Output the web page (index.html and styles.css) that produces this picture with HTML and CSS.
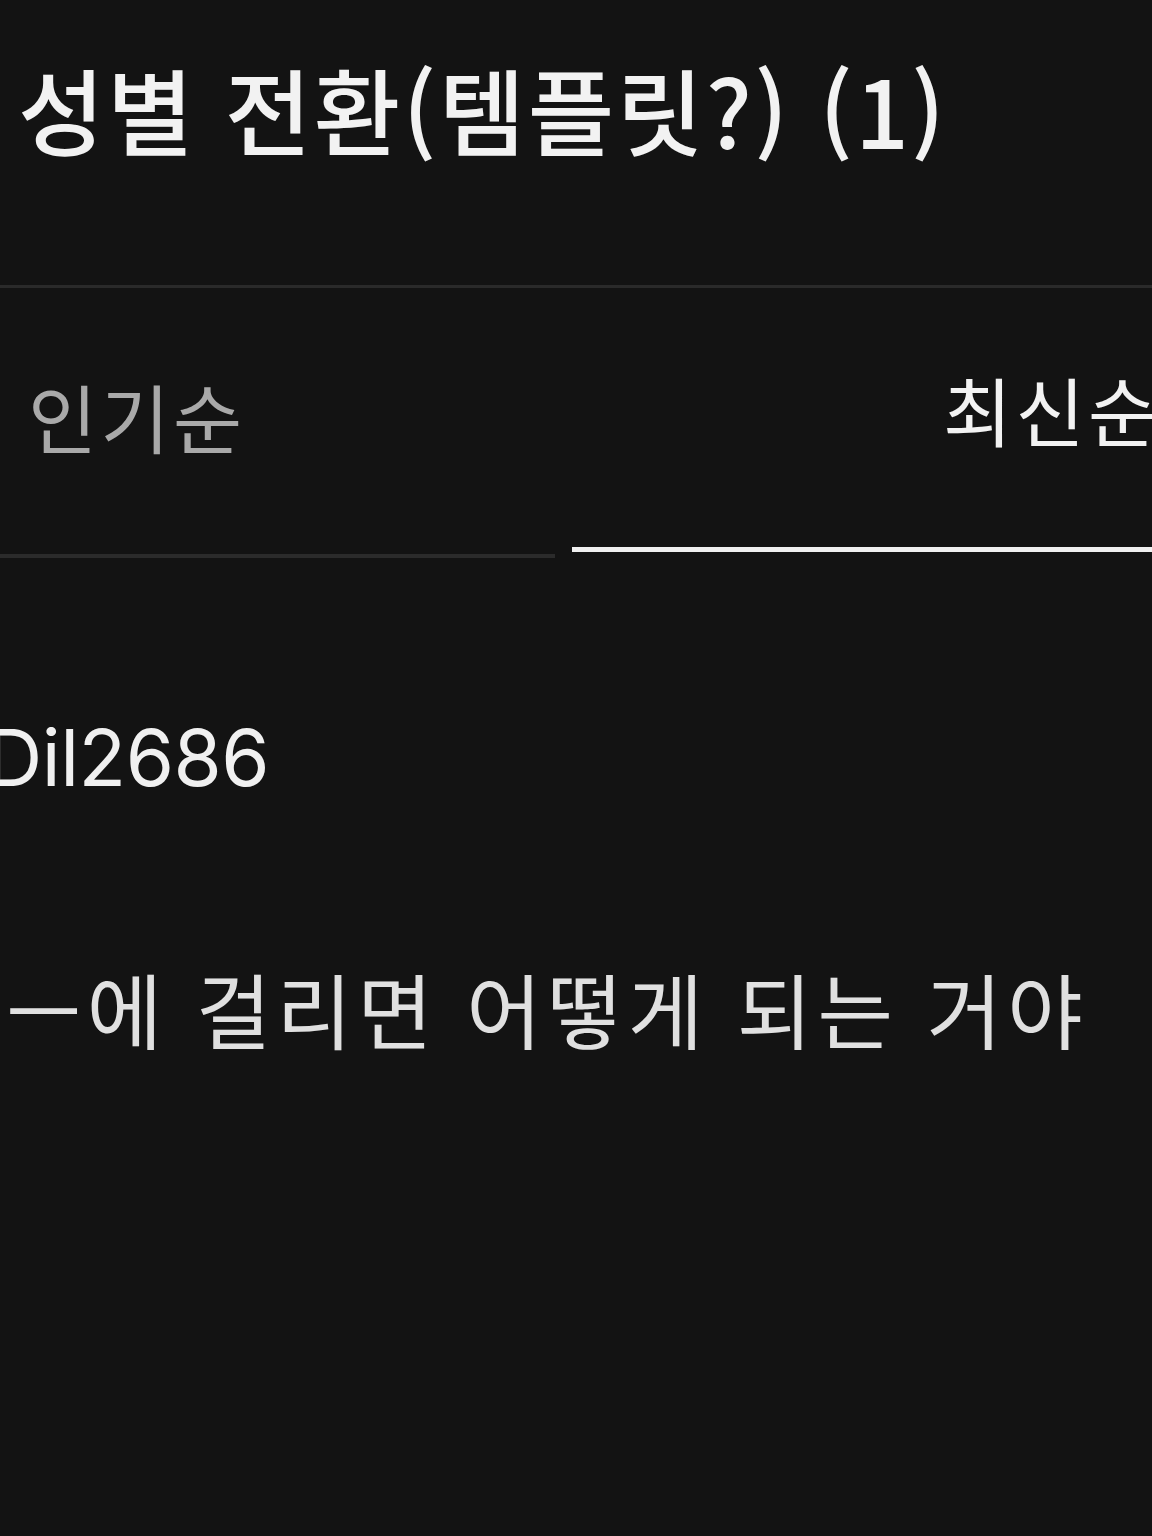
FILE: index.html
```html
<!DOCTYPE html>
<html lang="ko">
<head>
<meta charset="utf-8">
<title>성별 전환(템플릿?) (1)</title>
<link rel="stylesheet" href="styles.css">
</head>
<body>
<div class="page">
  <header class="header">
    <h1 class="title">성별 전환(템플릿?) (1)</h1>
  </header>
  <div class="divider"></div>
  <nav class="tabs">
    <div class="tab">
      <span class="tab-label">인기순</span>
      <div class="tab-line"></div>
    </div>
    <div class="tab tab-active">
      <span class="tab-label">최신순</span>
      <div class="tab-line"></div>
    </div>
  </nav>
  <section class="comment">
    <div class="comment-author">Dil2686</div>
    <p class="comment-body">ㅡ에 걸리면 어떻게 되는 거야</p>
  </section>
</div>
</body>
</html>
```
FILE: styles.css
```css
html, body {
  margin: 0;
  padding: 0;
  background: #131313;
}
.page {
  width: 1152px;
  height: 1536px;
  overflow: hidden;
  background: #131313;
  font-family: "Noto Sans CJK KR", "Noto Sans", sans-serif;
  color: #f0f0f0;
}
.header {
  padding: 38px 0 0 18px;
  height: 245px;
  box-sizing: border-box;
}
.title {
  margin: 0;
  font-size: 94px;
  font-weight: 500;
  line-height: 140px;
  color: #f2f2f2;
  white-space: nowrap;
  letter-spacing: 2.5px;
}
.divider {
  height: 3px;
  background: #2a2a2a;
  margin-top: 40px;
}
.tabs {
  display: flex;
  height: 270px;
}
.tab {
  flex: 0 0 560px;
  display: flex;
  flex-direction: column;
  justify-content: flex-end;
}
.tab-active {
  flex: 1;
}
.tab-label {
  font-size: 75px;
  line-height: 100px;
  color: #a9a9a9;
  white-space: nowrap;
  padding-left: 28px;
  margin-bottom: 88px;
  letter-spacing: 3.5px;
}
.tab-active .tab-label {
  color: #f2f2f2;
  padding-left: 383px;
}
.tab-line {
  height: 4px;
  background: #2b2b2b;
  margin-right: 5px;
}
.tab-active .tab-line {
  height: 5px;
  background: #f0f0f0;
  margin: 0 0 6px 12px;
}
.comment {
  padding-top: 150px;
}
.comment-author {
  font-family: "Inter", "Noto Sans", sans-serif;
  font-size: 78px;
  line-height: 100px;
  color: #f0f0f0;
  margin-left: -14px;
  letter-spacing: -0.5px;
  white-space: nowrap;
}
.comment-body {
  margin: 150px 0 0 6px;
  font-size: 82px;
  line-height: 100px;
  font-weight: 400;
  color: #e0e0e0;
  white-space: nowrap;
  letter-spacing: 5.3px;
}
```
